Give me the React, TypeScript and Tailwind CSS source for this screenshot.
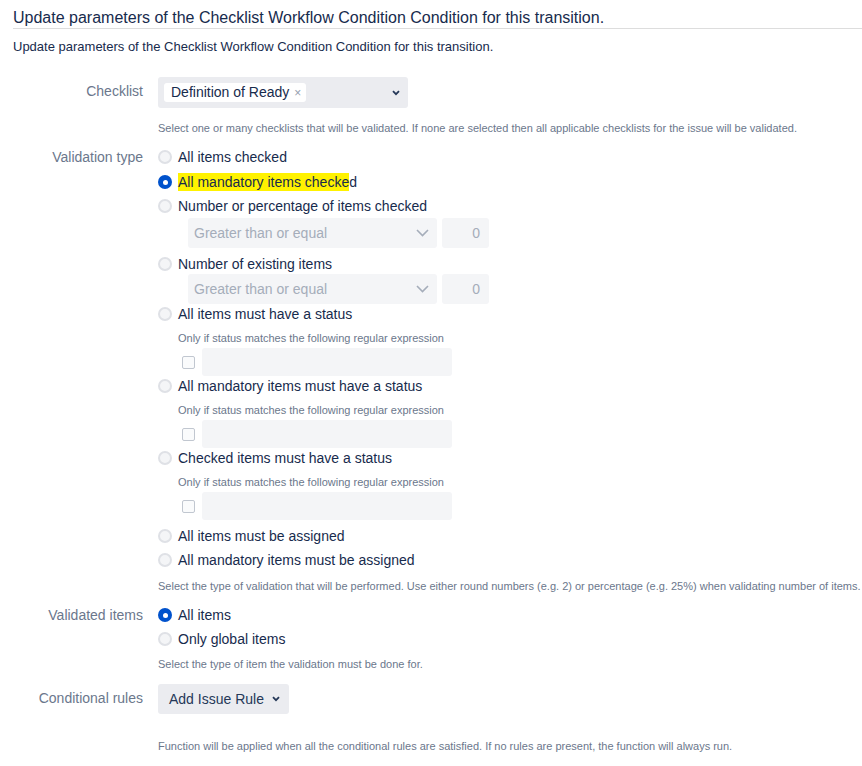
import type { ReactNode } from 'react';

function Radio({ checked }: { checked?: boolean }) {
  if (checked) {
    return (
      <span className="flex h-[14px] w-[14px] shrink-0 items-center justify-center rounded-full bg-[#0052cc]">
        <span className="h-[5px] w-[5px] rounded-full bg-white" />
      </span>
    );
  }
  return <span className="h-[14px] w-[14px] shrink-0 rounded-full border-2 border-[#dfe1e6] bg-[#f4f5f7]" />;
}

function RadioRow({ checked, children, className = '' }: { checked?: boolean; children: ReactNode; className?: string }) {
  return (
    <div className={`flex h-5 items-center gap-[6px] text-[14px] text-[#172b4d] ${className}`}>
      <Radio checked={checked} />
      <span className="leading-5">{children}</span>
    </div>
  );
}

function Help({ children, className = '' }: { children: ReactNode; className?: string }) {
  return <p className={`whitespace-nowrap text-[11px] leading-[14px] text-[#6b778c] ${className}`}>{children}</p>;
}

function ThinChevron() {
  return (
    <svg width="13" height="8" viewBox="0 0 13 8" fill="none">
      <path d="M1 1l5.5 5.5L12 1" stroke="#a5adba" strokeWidth="1.6" />
    </svg>
  );
}

function BoldChevron() {
  return (
    <svg width="8" height="6" viewBox="0 0 8 6" fill="none">
      <path d="M1 1.2l3 3 3-3" stroke="#253858" strokeWidth="1.8" />
    </svg>
  );
}

function CompareRow({ className = '' }: { className?: string }) {
  return (
    <div className={`ml-[30px] flex h-[30px] gap-[5px] ${className}`}>
      <div className="flex w-[249px] items-center justify-between rounded-[3px] bg-[#f4f5f7] pl-[6px] pr-[8px] text-[14px] text-[#a5adba]">
        <span>Greater than or equal</span>
        <ThinChevron />
      </div>
      <div className="flex w-[47px] items-center justify-end rounded-[3px] bg-[#f4f5f7] pr-[9px] text-[14px] text-[#a5adba]">0</div>
    </div>
  );
}

function RegexBlock() {
  return (
    <div className="ml-[20px]">
      <Help className="mt-[7px]">Only if status matches the following regular expression</Help>
      <div className="mt-[3px] flex items-center gap-[7px]">
        <span className="ml-[4px] h-[13px] w-[13px] rounded-[2px] border border-[#c1c7d0] bg-[#fafbfc]" />
        <div className="h-[28px] w-[250px] rounded-[3px] bg-[#f4f5f7]" />
      </div>
    </div>
  );
}

function Label({ children, className = '' }: { children: ReactNode; className?: string }) {
  return <div className={`w-[130px] shrink-0 text-right text-[14px] leading-5 text-[#6b778c] ${className}`}>{children}</div>;
}

export default function App() {
  return (
    <div className="min-h-[766px] bg-white pl-[13px] font-['Liberation_Sans',Arial,sans-serif]">
      <h2 className="border-b border-[#dddddd] pt-[8px] text-[16px] leading-5 text-[#172b4d]">
        Update parameters of the Checklist Workflow Condition Condition for this transition.
      </h2>
      <p className="mt-[10px] text-[13px] leading-4 text-[#172b4d]">
        Update parameters of the Checklist Workflow Condition Condition for this transition.
      </p>

      <div className="mt-[22px] flex gap-[15px]">
        <Label className="mt-[4px]">Checklist</Label>
        <div>
          <div className="flex h-[31px] w-[250px] items-center justify-between rounded-[3px] bg-[#ebecf0] pl-[6px] pr-[8px]">
            <span className="flex h-[19px] items-center gap-[5px] rounded-[3px] bg-white pl-[7px] pr-[5px] text-[14px] text-[#172b4d]">
              Definition of Ready
              <span className="text-[12px] text-[#97a0af]">×</span>
            </span>
            <BoldChevron />
          </div>
          <Help className="mt-[13px]">
            Select one or many checklists that will be validated. If none are selected then all applicable checklists for the issue will be validated.
          </Help>
        </div>
      </div>

      <div className="mt-[12px] flex gap-[15px]">
        <Label>Validation type</Label>
        <div>
          <RadioRow>All items checked</RadioRow>
          <RadioRow checked className="mt-[5px]">
            <span className="inline-block h-[18px] bg-[#fff200] leading-[19px]">All mandatory items checke</span>d
          </RadioRow>
          <RadioRow className="mt-[4px]">Number or percentage of items checked</RadioRow>
          <CompareRow className="mt-[2px]" />
          <RadioRow className="mt-[6px]">Number of existing items</RadioRow>
          <CompareRow />
          <RadioRow>All items must have a status</RadioRow>
          <RegexBlock />
          <RadioRow>All mandatory items must have a status</RadioRow>
          <RegexBlock />
          <RadioRow>Checked items must have a status</RadioRow>
          <RegexBlock />
          <RadioRow className="mt-[6px]">All items must be assigned</RadioRow>
          <RadioRow className="mt-[4px]">All mandatory items must be assigned</RadioRow>
          <Help className="mt-[9px]">
            Select the type of validation that will be performed. Use either round numbers (e.g. 2) or percentage (e.g. 25%) when validating number of items.
          </Help>
        </div>
      </div>

      <div className="mt-[12px] flex gap-[15px]">
        <Label>Validated items</Label>
        <div>
          <RadioRow checked>All items</RadioRow>
          <RadioRow className="mt-[4px]">Only global items</RadioRow>
          <Help className="mt-[8px]">Select the type of item the validation must be done for.</Help>
        </div>
      </div>

      <div className="mt-[13px] flex gap-[15px]">
        <Label className="mt-[4px]">Conditional rules</Label>
        <div>
          <button className="flex h-[30px] w-[131px] items-center gap-[8px] rounded-[3px] bg-[#ebecf0] pl-[11px] text-[14px] text-[#253858]">
            Add Issue Rule
            <BoldChevron />
          </button>
          <Help className="mt-[25px]">
            Function will be applied when all the conditional rules are satisfied. If no rules are present, the function will always run.
          </Help>
        </div>
      </div>
    </div>
  );
}
